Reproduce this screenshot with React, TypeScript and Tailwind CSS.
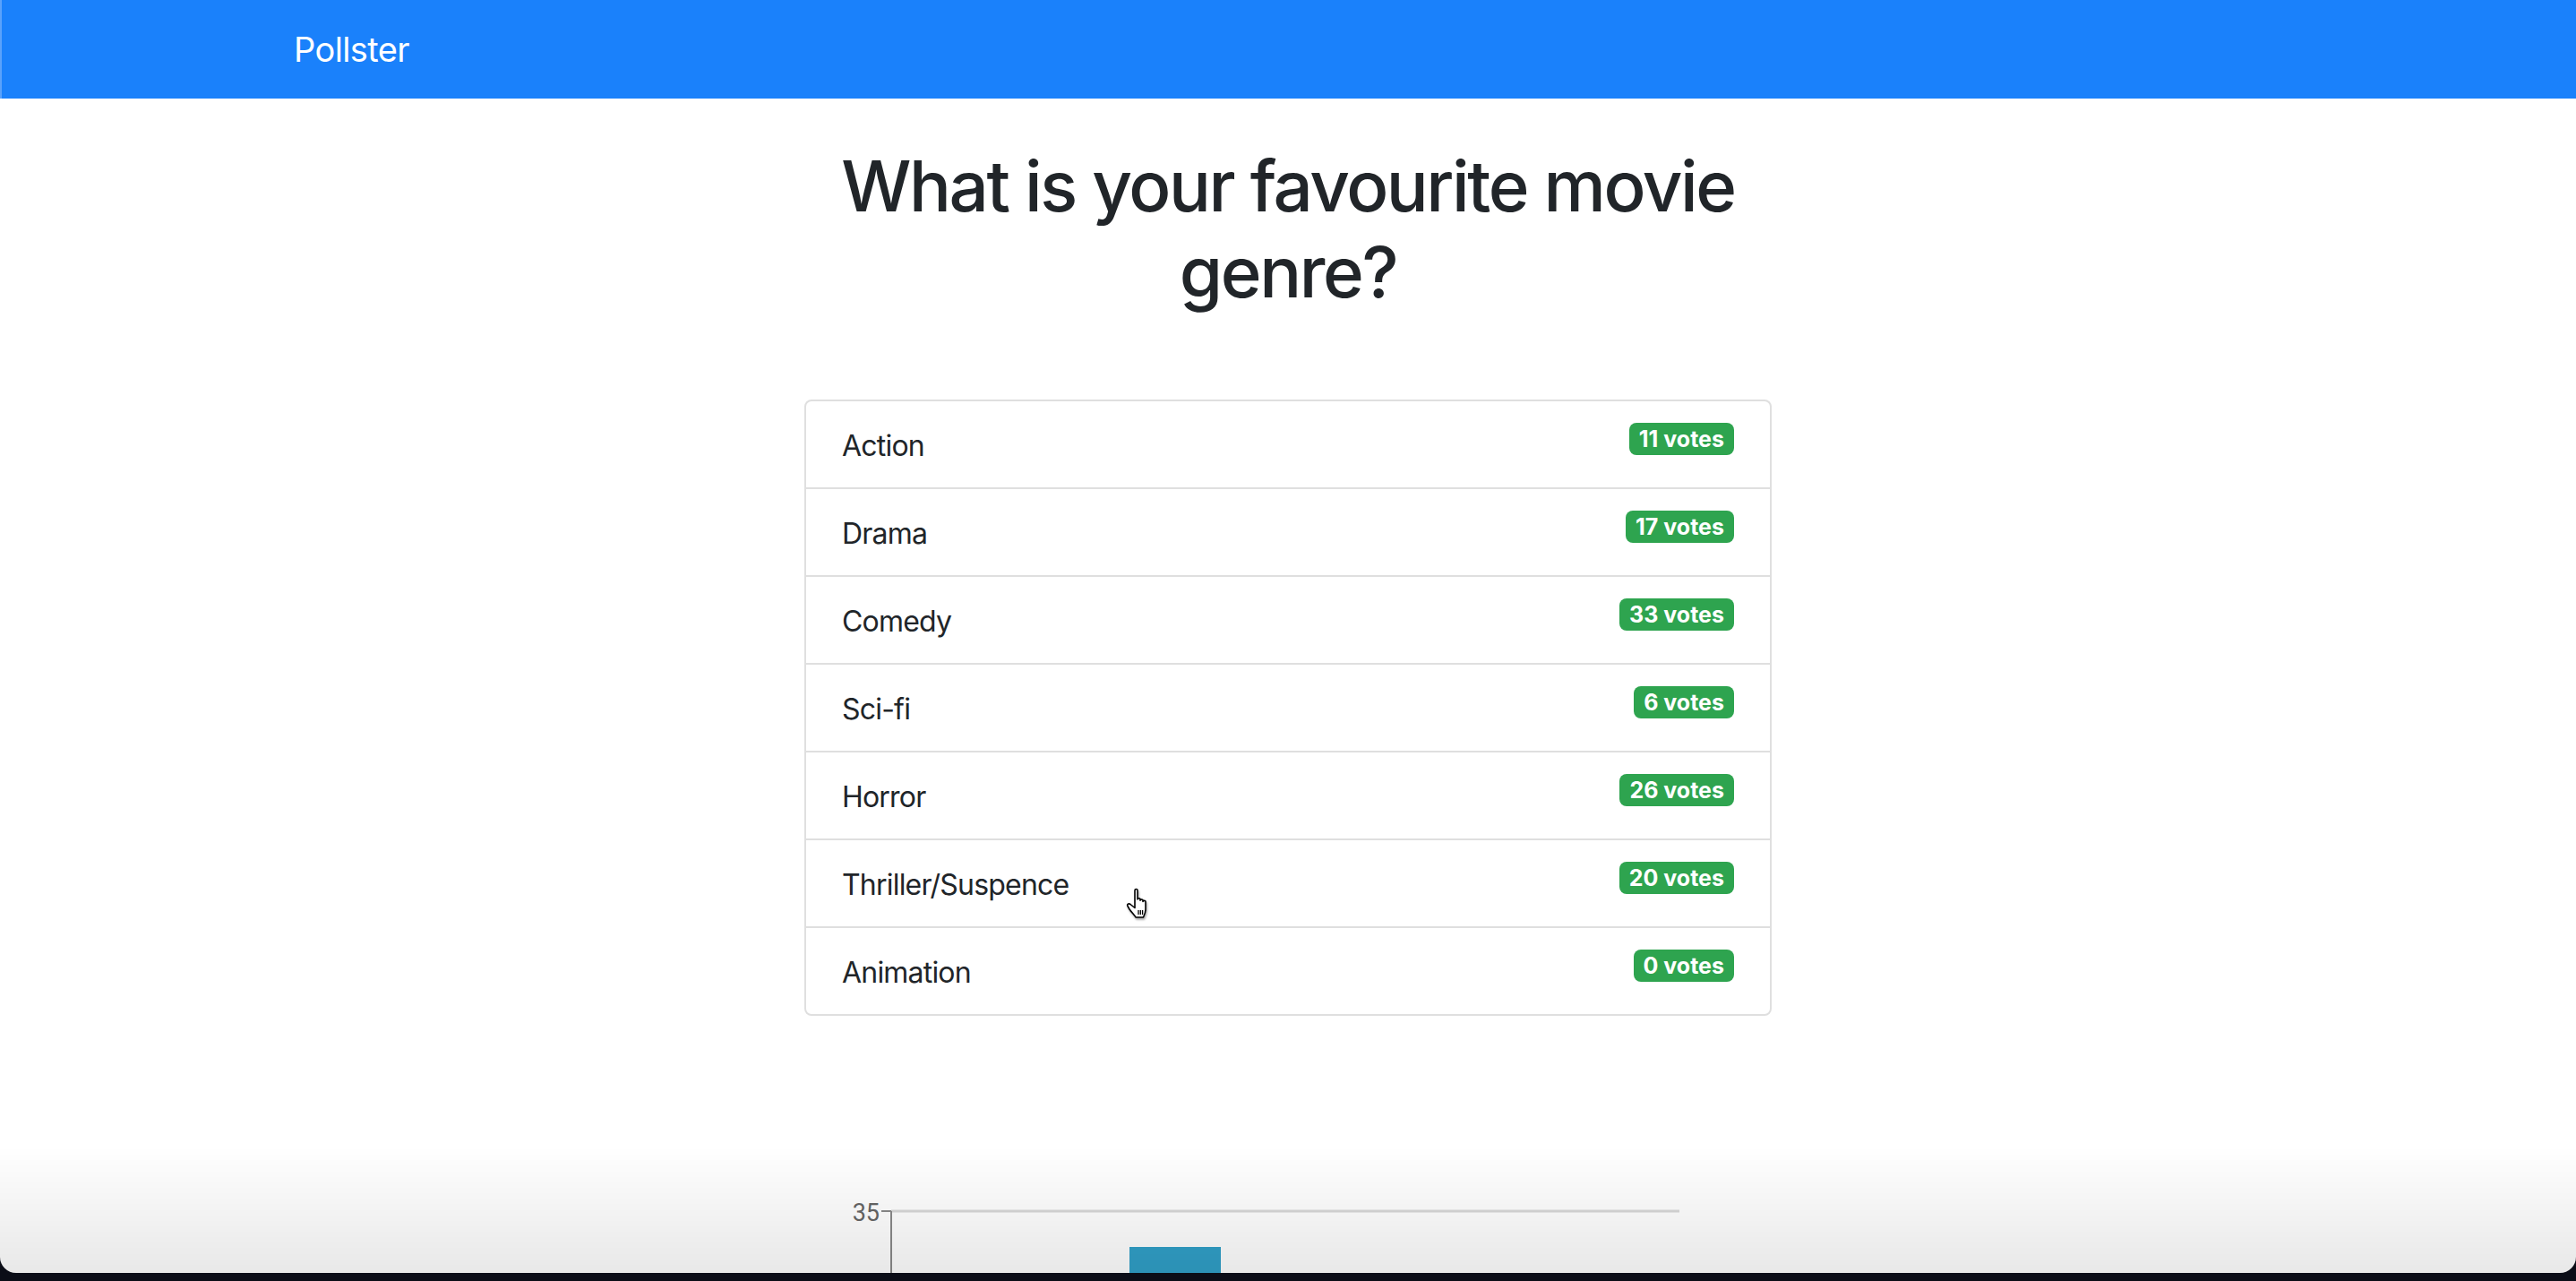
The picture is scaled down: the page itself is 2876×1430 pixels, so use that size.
import React from "react";

const options = [
  { name: "Action", votes: 11 },
  { name: "Drama", votes: 17 },
  { name: "Comedy", votes: 33 },
  { name: "Sci-fi", votes: 6 },
  { name: "Horror", votes: 26 },
  { name: "Thriller/Suspence", votes: 20 },
  { name: "Animation", votes: 0 },
];

function HandCursor() {
  return (
    <svg width="34" height="38" viewBox="0 0 34 38" className="drop-shadow-[1px_2px_1px_rgba(0,0,0,0.35)]">
      <path
        d="M10 4 C10 2 13 2 13 4 L13 14 C13 12.3 16 12.3 16 14 L16 15.2 C16 13.6 19 13.6 19 15.2 L19 16.5 C19 15 22 15 22 16.5 L22 25 C22 29 20.5 32 19.5 34 L11 34 C10 32 6 28 4 25 L2 21.5 C1 19.5 3 18 5 19.5 L10 23.5 Z"
        fill="#ffffff"
        stroke="#000000"
        strokeWidth="1.6"
        strokeLinejoin="round"
      />
      <path d="M14 26 L14 31 M16.3 26 L16.3 31 M18.6 26 L18.6 31" stroke="#000000" strokeWidth="1.3" />
    </svg>
  );
}

export default function App() {
  return (
    <div className="relative min-h-screen bg-white font-['Inter','Noto_Sans',sans-serif] text-[#212529]">
      <nav className="flex h-[110px] items-center border-l-2 border-[#5aa2fb] bg-[#1a81fb] pl-[326px]">
        <span className="text-[38px] leading-[60px] tracking-[-0.6px] text-white">Pollster</span>
      </nav>

      <main className="mx-auto w-[1080px]">
        <h1 className="mt-[50px] text-center text-[78px] font-medium leading-[96px] tracking-[-2.4px]">
          What is your favourite movie genre?
        </h1>

        <ul className="mt-[94px] overflow-hidden rounded-[8px] border-2 border-[#dfdfdf]">
          {options.map((o, i) => (
            <li
              key={o.name}
              className={
                "flex items-start justify-between px-[40px] pt-[26px] pb-[22px] " +
                (i > 0 ? "border-t-2 border-[#dfdfdf]" : "")
              }
            >
              <span className="text-[32px] leading-[48px] tracking-[-0.8px]">{o.name}</span>
              <span className="-mt-[2px] rounded-[8px] bg-[#2ea44f] px-[11px] py-[6px] text-[25px] font-bold leading-[24px] text-white">
                {o.votes} votes
              </span>
            </li>
          ))}
        </ul>

        <svg width="1080" height="820" viewBox="0 0 1080 820" className="mt-[101px] block">
          <line x1="97" y1="117" x2="977" y2="117" stroke="#d9d9d9" strokeWidth="3" />
          <line x1="86" y1="117" x2="97" y2="117" stroke="#8a8a8a" strokeWidth="2" />
          <line x1="97" y1="117" x2="97" y2="817" stroke="#8a8a8a" strokeWidth="2" />
          <text x="84" y="128" textAnchor="end" fontSize="27" fill="#666666" fontFamily="Roboto, sans-serif">
            35
          </text>
          <rect x="363" y="157" width="102" height="660" fill="#31a0c8" />
        </svg>
      </main>

      <div className="absolute left-[1257px] top-[990px] pointer-events-none">
        <HandCursor />
      </div>

      <div className="pointer-events-none fixed inset-x-0 bottom-0 h-[150px] overflow-hidden">
        <div className="absolute inset-x-0 top-0 bottom-[9px] rounded-b-[18px] bg-linear-to-b from-transparent to-[rgba(0,0,0,0.09)] shadow-[0_0_0_80px_#0b0d17]" />
      </div>
    </div>
  );
}
